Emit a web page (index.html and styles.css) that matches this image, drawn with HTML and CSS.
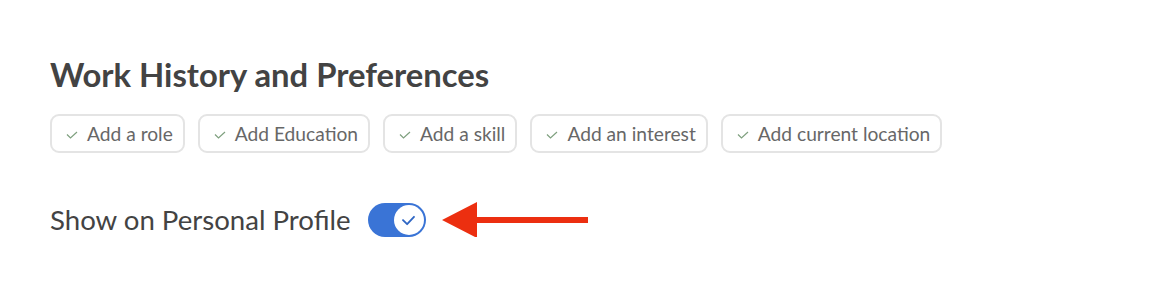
FILE: index.html
```html
<!DOCTYPE html>
<html>
<head>
<meta charset="utf-8">
<link rel="stylesheet" href="styles.css">
</head>
<body>
<section class="panel">
  <h2 class="title">Work History and Preferences</h2>
  <div class="chips">
    <span class="chip"><svg class="tick" viewBox="0 0 12 8" width="12" height="8"><path d="M1 3.5 L4.5 7 L11 1" fill="none" stroke="#7fa07f" stroke-width="1.2"/></svg>Add a role</span>
    <span class="chip"><svg class="tick" viewBox="0 0 12 8" width="12" height="8"><path d="M1 3.5 L4.5 7 L11 1" fill="none" stroke="#7fa07f" stroke-width="1.2"/></svg>Add Education</span>
    <span class="chip"><svg class="tick" viewBox="0 0 12 8" width="12" height="8"><path d="M1 3.5 L4.5 7 L11 1" fill="none" stroke="#7fa07f" stroke-width="1.2"/></svg>Add a skill</span>
    <span class="chip"><svg class="tick" viewBox="0 0 12 8" width="12" height="8"><path d="M1 3.5 L4.5 7 L11 1" fill="none" stroke="#7fa07f" stroke-width="1.2"/></svg>Add an interest</span>
    <span class="chip"><svg class="tick" viewBox="0 0 12 8" width="12" height="8"><path d="M1 3.5 L4.5 7 L11 1" fill="none" stroke="#7fa07f" stroke-width="1.2"/></svg>Add current location</span>
  </div>
  <div class="setting">
    <span class="label">Show on Personal Profile</span>
    <span class="toggle"><span class="knob"><svg viewBox="0 0 16 12" width="15" height="11"><path d="M2 5.5 L6.5 10 L14 2" fill="none" stroke="#2f66c4" stroke-width="2" stroke-linecap="round" stroke-linejoin="round"/></svg></span></span>
    <svg class="arrow" viewBox="0 0 146 36" width="146" height="36"><polygon points="0,18 35,0 35,15 146,15 146,21 35,21 35,36" fill="#ec2f10"/></svg>
  </div>
</section>
</body>
</html>
```
FILE: styles.css
```css
html, body { margin: 0; background: #fff; }
body { font-family: "Lato", "Noto Sans", sans-serif; color: #444; }
.panel { padding: 56px 0 0 50px; }
.title { margin: 0; font-size: 32.8px; font-weight: 700; color: #434343; line-height: 38px; }
.chips { display: flex; gap: 13px; margin-top: 20px; }
.chip { display: inline-flex; align-items: center; height: 35px; padding: 0 10px 0 14px; border: 2px solid #e4e4e4; border-radius: 9px; font-size: 19.2px; color: #676767; }
.tick { margin-right: 9px; margin-top: 2px; }
.setting { display: flex; align-items: center; height: 34px; margin-top: 50px; }
.label { font-size: 27.6px; line-height: 34px; color: #434343; }
.toggle { display: inline-flex; align-items: center; justify-content: flex-end; width: 58px; height: 34px; margin-left: 17px; border-radius: 17px; background: #3a74d6; box-sizing: border-box; padding-right: 2px; }
.knob { width: 30px; height: 30px; border-radius: 50%; background: #fff; display: flex; align-items: center; justify-content: center; }
.arrow { margin-left: 16px; }
```
